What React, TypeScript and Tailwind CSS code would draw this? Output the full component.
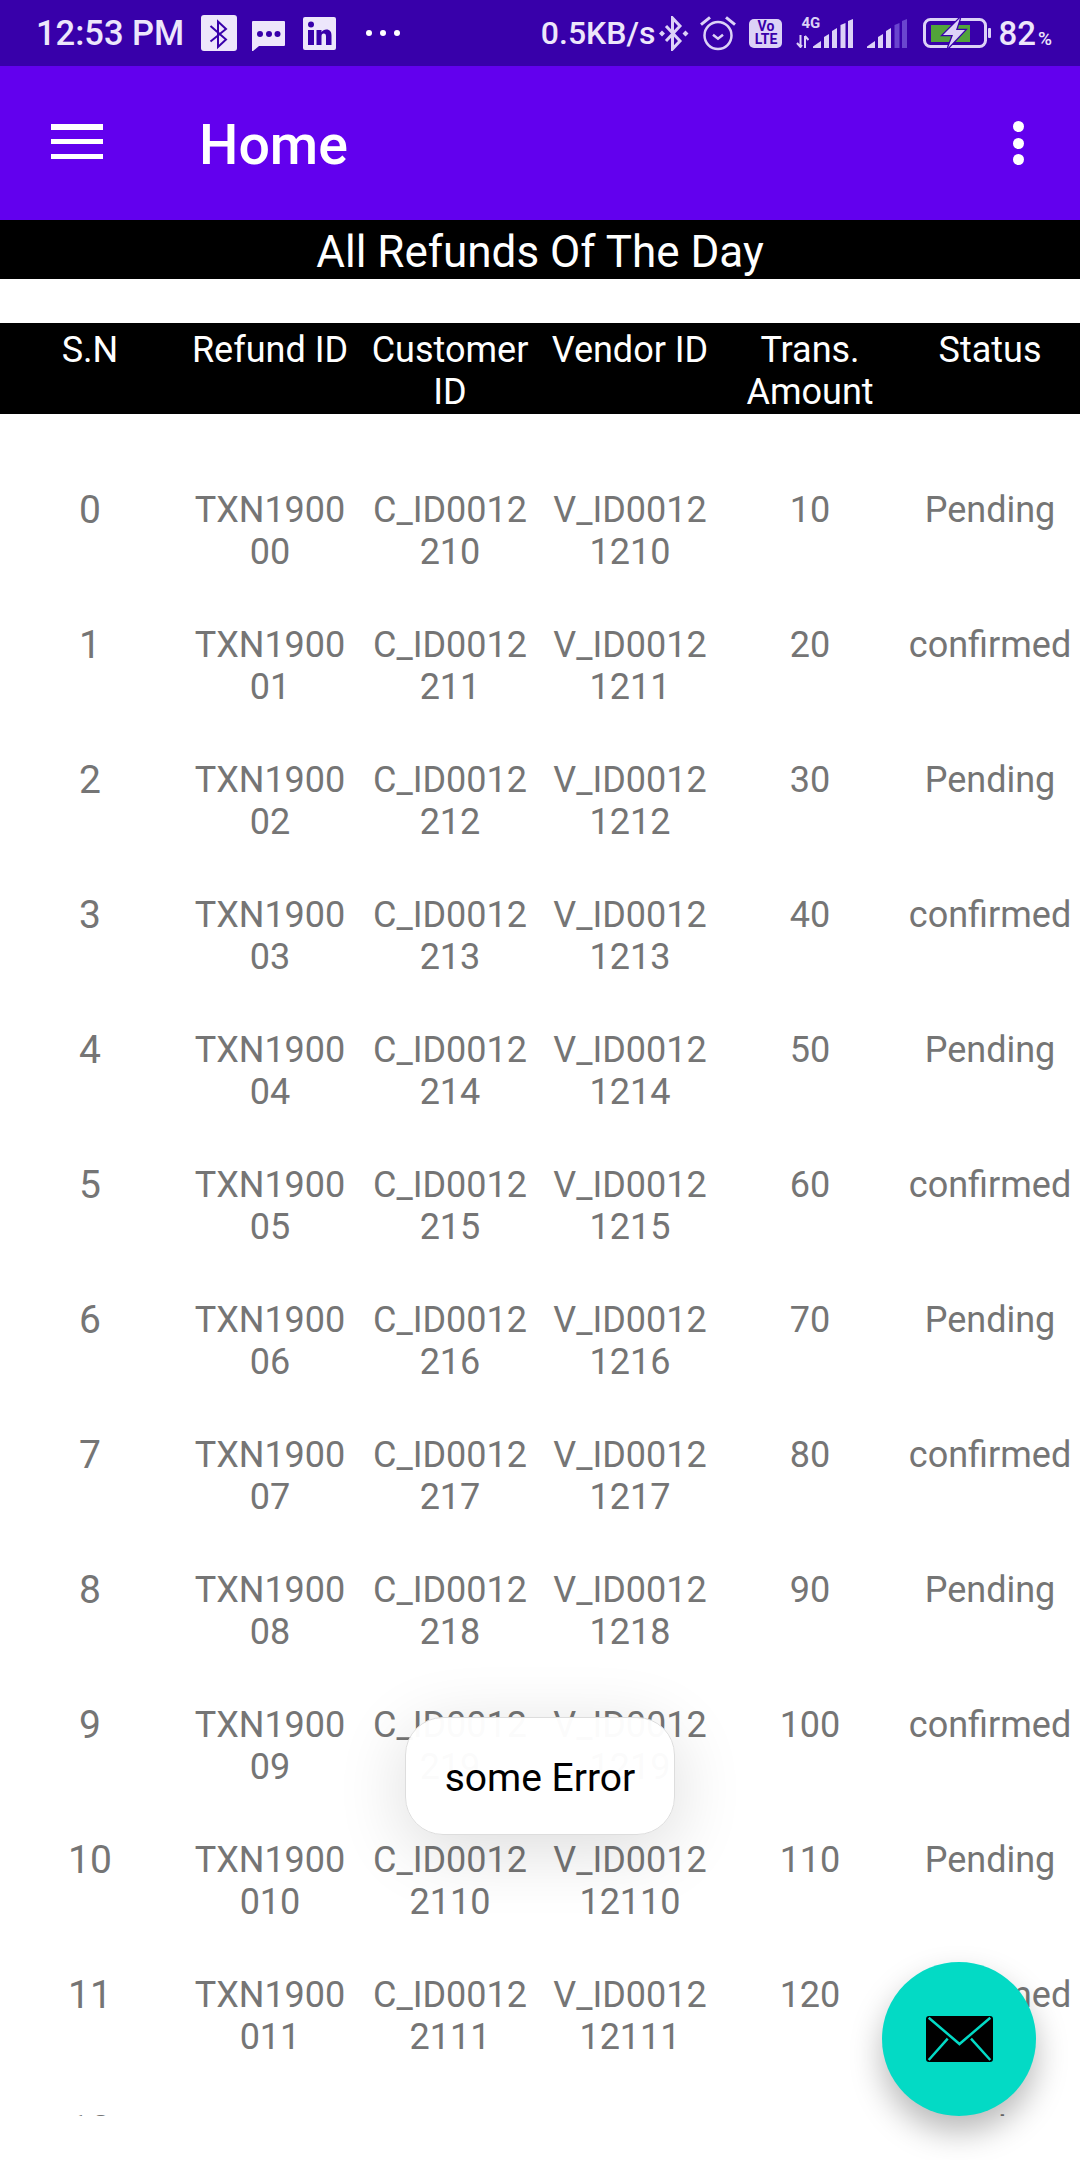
import React from "react";

const rows = Array.from({ length: 13 }, (_, i) => ({
  sn: i,
  refund: `TXN19000${i}`,
  customer: `C_ID001221${i}`,
  vendor: `V_ID0012121${i}`,
  amount: (i + 1) * 10,
  status: i % 2 === 0 ? "Pending" : "confirmed",
}));

function NotificationIcons() {
  return (
    <div className="flex items-center">
      {/* bluetooth tile */}
      <svg width="36" height="36" viewBox="0 0 36 36" className="ml-[17px]">
        <rect width="36" height="36" rx="3" fill="#ede6fb" />
        <path d="M9.500 11L25 24.500 17 32V6.500L25 14 9.500 26.500" fill="none" stroke="#3800aa" strokeWidth="2" />
      </svg>
      {/* message tile */}
      <svg width="33" height="30" viewBox="0 0 33 30" className="ml-[15px] mt-[5px]">
        <path d="M1 0h31a1 1 0 0 1 1 1v23a1 1 0 0 1-1 1H7l-6 5h-1V1a1 1 0 0 1 1-1z" fill="#ede6fb" />
        <circle cx="8" cy="13" r="3" fill="#3800aa" />
        <circle cx="17" cy="13" r="3" fill="#3800aa" />
        <circle cx="25.500" cy="13" r="3" fill="#3800aa" />
      </svg>
      {/* linkedin tile */}
      <svg width="33" height="33" viewBox="0 0 33 33" className="ml-[18px]">
        <rect width="33" height="33" rx="2" fill="#ede6fb" />
        <circle cx="8" cy="7.500" r="3" fill="#3800aa" />
        <rect x="5" y="13" width="6" height="15" fill="#3800aa" />
        <path d="M13.500 13h5v2.200c1-1.700 2.800-2.600 4.800-2.600 3.800 0 5.200 2.500 5.200 6V28h-5.500v-8.500c0-1.800-.6-3-2.200-3-1.700 0-2.300 1.300-2.300 3V28h-5z" fill="#3800aa" />
      </svg>
      <div className="ml-[30px] flex gap-[8px]">
        <span className="h-[6px] w-[6px] rounded-full bg-white" />
        <span className="h-[6px] w-[6px] rounded-full bg-white" />
        <span className="h-[6px] w-[6px] rounded-full bg-white" />
      </div>
    </div>
  );
}

function SignalBars({ dim }: { dim?: boolean }) {
  const on = "#dcd2f7";
  const last = dim ? "#6a45cf" : on;
  return (
    <svg width="40" height="29" viewBox="0 0 40 29">
      <path d="M0 29v-1.500L8 22v7z" fill={on} />
      <path d="M11 29V18l5-3v14z" fill={on} />
      <path d="M19 29V12l5-3v20z" fill={on} />
      <path d="M27.500 29V6l5-2v25z" fill={last} />
      <path d="M35 29V2l5-2v29z" fill={last} />
    </svg>
  );
}

function SystemIcons() {
  return (
    <div className="flex items-center">
      {/* bluetooth */}
      <svg width="30" height="35" viewBox="0 0 30 35" className="ml-[4px]">
        <path d="M7 10l14 15-7.500 8V2L21 10 7 25" fill="none" stroke="#dcd2f7" strokeWidth="3" />
        <path d="M3 14.500l3 3-3 3-3-3zM26.500 14.500l3 3-3 3-3-3z" fill="#dcd2f7" />
      </svg>
      {/* alarm */}
      <svg width="36" height="35" viewBox="0 0 36 35" className="ml-[11px]">
        <circle cx="18" cy="19.500" r="13.500" fill="none" stroke="#dcd2f7" strokeWidth="2.500" />
        <path d="M13 18.700l5 4 5-4" fill="none" stroke="#dcd2f7" strokeWidth="2.500" />
        <path d="M1 8.700L10 1.300M35 8.700L26 1.300" stroke="#dcd2f7" strokeWidth="3" />
      </svg>
      {/* volte */}
      <div className="ml-[13px] flex h-[29px] w-[33px] flex-col items-center justify-center rounded-[5px] bg-[#dcd2f7] text-[14px] font-bold leading-[13px] text-[#3800aa]">
        <span>Vo</span>
        <span>LTE</span>
      </div>
      {/* mobile signal */}
      <div className="relative ml-[14px] flex h-[30px] w-[57px] items-end justify-end">
        <span className="absolute left-[5px] top-[-2px] text-[15px] font-bold leading-[14px] text-[#dcd2f7]">4G</span>
        <svg width="13" height="13" viewBox="0 0 13 13" className="absolute bottom-0 left-0">
          <path d="M4.500 0v12M1 8l3.500 4L6 10M9 13V1M9 1l3.500 4" fill="none" stroke="#dcd2f7" strokeWidth="2" />
        </svg>
        <SignalBars />
      </div>
      <div className="ml-[14px] mt-[1px]">
        <SignalBars dim />
      </div>
      {/* battery */}
      <svg width="68" height="30" viewBox="0 0 68 30" className="ml-[16px]">
        <rect x="1.500" y="1.500" width="61" height="27" rx="6" fill="none" stroke="#dcd2f7" strokeWidth="3" />
        <rect x="8" y="7" width="39" height="17" fill="#52a43a" />
        <path d="M37 0L20 17h10l-5 13 17-18H33z" fill="#dcd2f7" stroke="#3800aa" strokeWidth="2.500" paintOrder="stroke" />
        <rect x="65" y="10" width="3" height="10" rx="1" fill="#dcd2f7" />
      </svg>
      <span className="ml-[7px] text-[33px] font-medium leading-none">
        82<span className="ml-[2px] text-[19px]">%</span>
      </span>
    </div>
  );
}

function Cell({ children, large }: { children: React.ReactNode; large?: boolean }) {
  return (
    <div className={`break-words px-2 text-center ${large ? "text-[39px]" : "text-[36px]"}`}>
      {children}
    </div>
  );
}

export default function App() {
  return (
    <div className="relative flex h-[2160px] w-full flex-col overflow-hidden bg-white font-['Roboto',sans-serif]">
      {/* status bar */}
      <div className="flex h-[66px] items-center justify-between bg-[#3800aa] pl-[36px] pr-[28px] text-[#ede6fb]">
        <div className="flex items-center">
          <span className="text-[34.500px] font-medium leading-none">12:53 PM</span>
          <NotificationIcons />
        </div>
        <div className="flex items-center">
          <span className="text-[32px] font-medium leading-none">0.5KB/s</span>
          <SystemIcons />
        </div>
      </div>

      {/* app bar */}
      <div className="flex h-[154px] items-center bg-[#6200ee] pl-[51px] pr-[56px] text-white">
        <div className="mb-[3px] flex h-[35px] w-[52px] flex-col justify-between">
          <span className="block h-[5.500px] bg-white" />
          <span className="block h-[5.500px] bg-white" />
          <span className="block h-[5.500px] bg-white" />
        </div>
        <h1 className="ml-[96px] flex-1 pt-[6px] text-[55.500px] font-medium leading-none">Home</h1>
        <div className="flex flex-col gap-[5.500px]">
          <span className="h-[11px] w-[11px] rounded-full bg-white" />
          <span className="h-[11px] w-[11px] rounded-full bg-white" />
          <span className="h-[11px] w-[11px] rounded-full bg-white" />
        </div>
      </div>

      <div className="flex h-[59px] items-center justify-center bg-black pt-[5px] text-[44px] leading-none text-white">
        All Refunds Of The Day
      </div>

      {/* table header */}
      <div className="mt-[44px] grid h-[91px] grid-cols-6 bg-black pt-[6px] leading-[42px] text-white">
        <Cell>S.N</Cell>
        <Cell>Refund ID</Cell>
        <Cell>Customer ID</Cell>
        <Cell>Vendor ID</Cell>
        <Cell>Trans. Amount</Cell>
        <Cell>Status</Cell>
      </div>

      {/* rows */}
      <div className="h-[1702px] overflow-hidden pt-[75px] leading-[42px] text-[#757575]">
        {rows.map((r) => (
          <div key={r.sn} className="grid h-[135px] grid-cols-6">
            <Cell large>{r.sn}</Cell>
            <Cell>{r.refund}</Cell>
            <Cell>{r.customer}</Cell>
            <Cell>{r.vendor}</Cell>
            <Cell>{r.amount}</Cell>
            <Cell>{r.status}</Cell>
          </div>
        ))}
      </div>

      {/* toast */}
      <div className="absolute left-[405px] top-[1717px] flex h-[118px] w-[270px] items-center justify-center rounded-[38px] border border-[#dddddd] bg-white/[0.97] pt-[4px] text-[39px] text-black shadow-[0_14px_70px_rgba(0,0,0,0.14)]">
        some Error
      </div>

      {/* fab */}
      <div className="absolute left-[882px] top-[1962px] flex h-[154px] w-[154px] items-center justify-center rounded-full bg-[#03dac5] shadow-[0_16px_32px_rgba(0,0,0,0.28)]">
        <svg width="67" height="46" viewBox="0 0 67 46">
          <rect width="67" height="46" rx="3" fill="#000" />
          <path d="M2.700 1.700L33.500 28 64.300 1.700M2.700 44l19-21.300M64.300 44L45 22.700" fill="none" stroke="#03dac5" strokeWidth="2.500" />
        </svg>
      </div>
    </div>
  );
}
